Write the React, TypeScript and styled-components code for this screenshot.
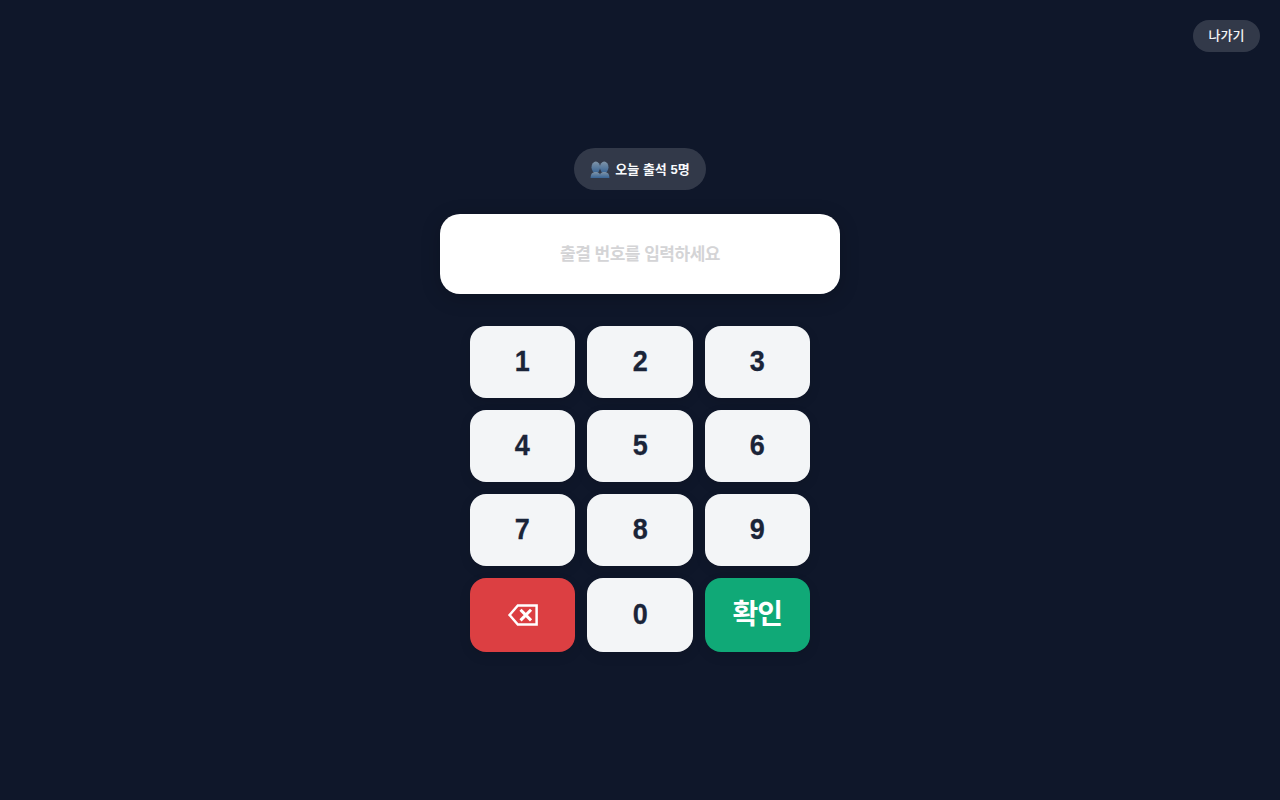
import React from "react";
import styled, { createGlobalStyle } from "styled-components";

const Global = createGlobalStyle`
  html, body { margin: 0; padding: 0; height: 100%; background: #0f172a; }
  body { font-family: "Liberation Sans", "Noto Sans CJK KR", Arial, sans-serif; }
  #root { min-height: 100vh; }
`;

const Page = styled.main`
  position: relative;
  height: 100vh;
  background: #0f172a;
  display: flex;
  flex-direction: column;
  align-items: center;
  justify-content: center;
`;

const ExitButton = styled.button`
  position: absolute;
  top: 20px;
  right: 20px;
  padding: 8px 15.5px;
  border: 0;
  border-radius: 20px;
  background: rgba(255, 255, 255, 0.15);
  color: #f4f4f5;
  font: 500 13px/16px "Liberation Sans", "Noto Sans CJK KR", sans-serif;
`;

const AttendanceBadge = styled.div`
  display: flex;
  align-items: center;
  gap: 5px;
  height: 42px;
  box-sizing: border-box;
  padding: 0 16px;
  border-radius: 21px;
  background: rgba(255, 255, 255, 0.15);
  color: #f8fafc;
  font-size: 13px;
  font-weight: 600;
  margin-bottom: 24px;
`;

const BadgeLabel = styled.span`
  margin-bottom: 2px;
`;

const Display = styled.div`
  width: 400px;
  height: 80px;
  box-sizing: border-box;
  padding-bottom: 4px;
  background: #fff;
  border-radius: 20px;
  display: flex;
  align-items: center;
  justify-content: center;
  color: #d4d4d6;
  font-size: 17px;
  font-weight: 600;
  letter-spacing: -0.5px;
  margin-bottom: 32px;
  box-shadow: 0 4px 20px rgba(0, 0, 0, 0.2);
`;

const Keypad = styled.div`
  width: 340px;
  display: grid;
  grid-template-columns: repeat(3, 1fr);
  gap: 12px;
`;

const Key = styled.button<{ $tone?: "danger" | "confirm" }>`
  padding: 20px;
  border: 0;
  border-radius: 16px;
  font-family: "Liberation Sans", "Noto Sans CJK KR", sans-serif;
  font-size: 28px;
  line-height: ${(p) => (p.$tone === "confirm" ? "34px" : "32px")};
  font-weight: 700;
  background: ${(p) => (p.$tone === "danger" ? "#dc3f42" : p.$tone === "confirm" ? "#10a977" : "#f3f5f7")};
  color: ${(p) => (p.$tone ? "#fff" : "#1a2438")};
  display: flex;
  align-items: center;
  justify-content: center;
  box-shadow: 0 4px 12px rgba(0, 0, 0, 0.1);
`;

const Digit = styled.span`
  display: inline-block;
  font-size: 30px;
  -webkit-text-stroke: 0.3px #1a2438;
  transform: translateY(-1px) scaleX(0.9);
`;

const ConfirmLabel = styled.span`
  letter-spacing: -1px;
`;

const PeopleIcon = () => (
  <svg width="20" height="18" viewBox="0 0 20 18" aria-hidden="true">
    <defs>
      <linearGradient id="people" x1="0" y1="0" x2="0" y2="1">
        <stop offset="0" stopColor="#7f94a8" />
        <stop offset="1" stopColor="#386495" />
      </linearGradient>
    </defs>
    <g fill="url(#people)">
      <ellipse cx="5.8" cy="7.2" rx="4.3" ry="5.6" />
      <path d="M.6 18c0-3.8 1.4-6 5.2-6s4.6 2.2 4.6 6z" />
      <ellipse cx="14.2" cy="7.2" rx="4.3" ry="5.6" />
      <path d="M9.6 18c0-3.8.8-6 4.6-6s5.2 2.2 5.2 6z" />
    </g>
  </svg>
);

const BackspaceIcon = () => (
  <svg width="32" height="23" viewBox="0 0 32 24" aria-hidden="true" fill="none" stroke="#fff" strokeWidth="2.6">
    <path d="M30.2 1.6H10.6L2 11.5l8.6 9.9h19.6z" />
    <path d="M13.4 6l11 11M24.4 6l-11 11" strokeWidth="3.2" />
  </svg>
);

const keys = ["1", "2", "3", "4", "5", "6", "7", "8", "9"];

export default function App() {
  return (
    <Page>
      <Global />
      <ExitButton>나가기</ExitButton>
      <AttendanceBadge>
        <PeopleIcon />
        <BadgeLabel>오늘 출석 5명</BadgeLabel>
      </AttendanceBadge>
      <Display>출결 번호를 입력하세요</Display>
      <Keypad>
        {keys.map((k) => (
          <Key key={k}>
            <Digit>{k}</Digit>
          </Key>
        ))}
        <Key $tone="danger" aria-label="지우기">
          <BackspaceIcon />
        </Key>
        <Key>
          <Digit>0</Digit>
        </Key>
        <Key $tone="confirm">
          <ConfirmLabel>확인</ConfirmLabel>
        </Key>
      </Keypad>
    </Page>
  );
}
